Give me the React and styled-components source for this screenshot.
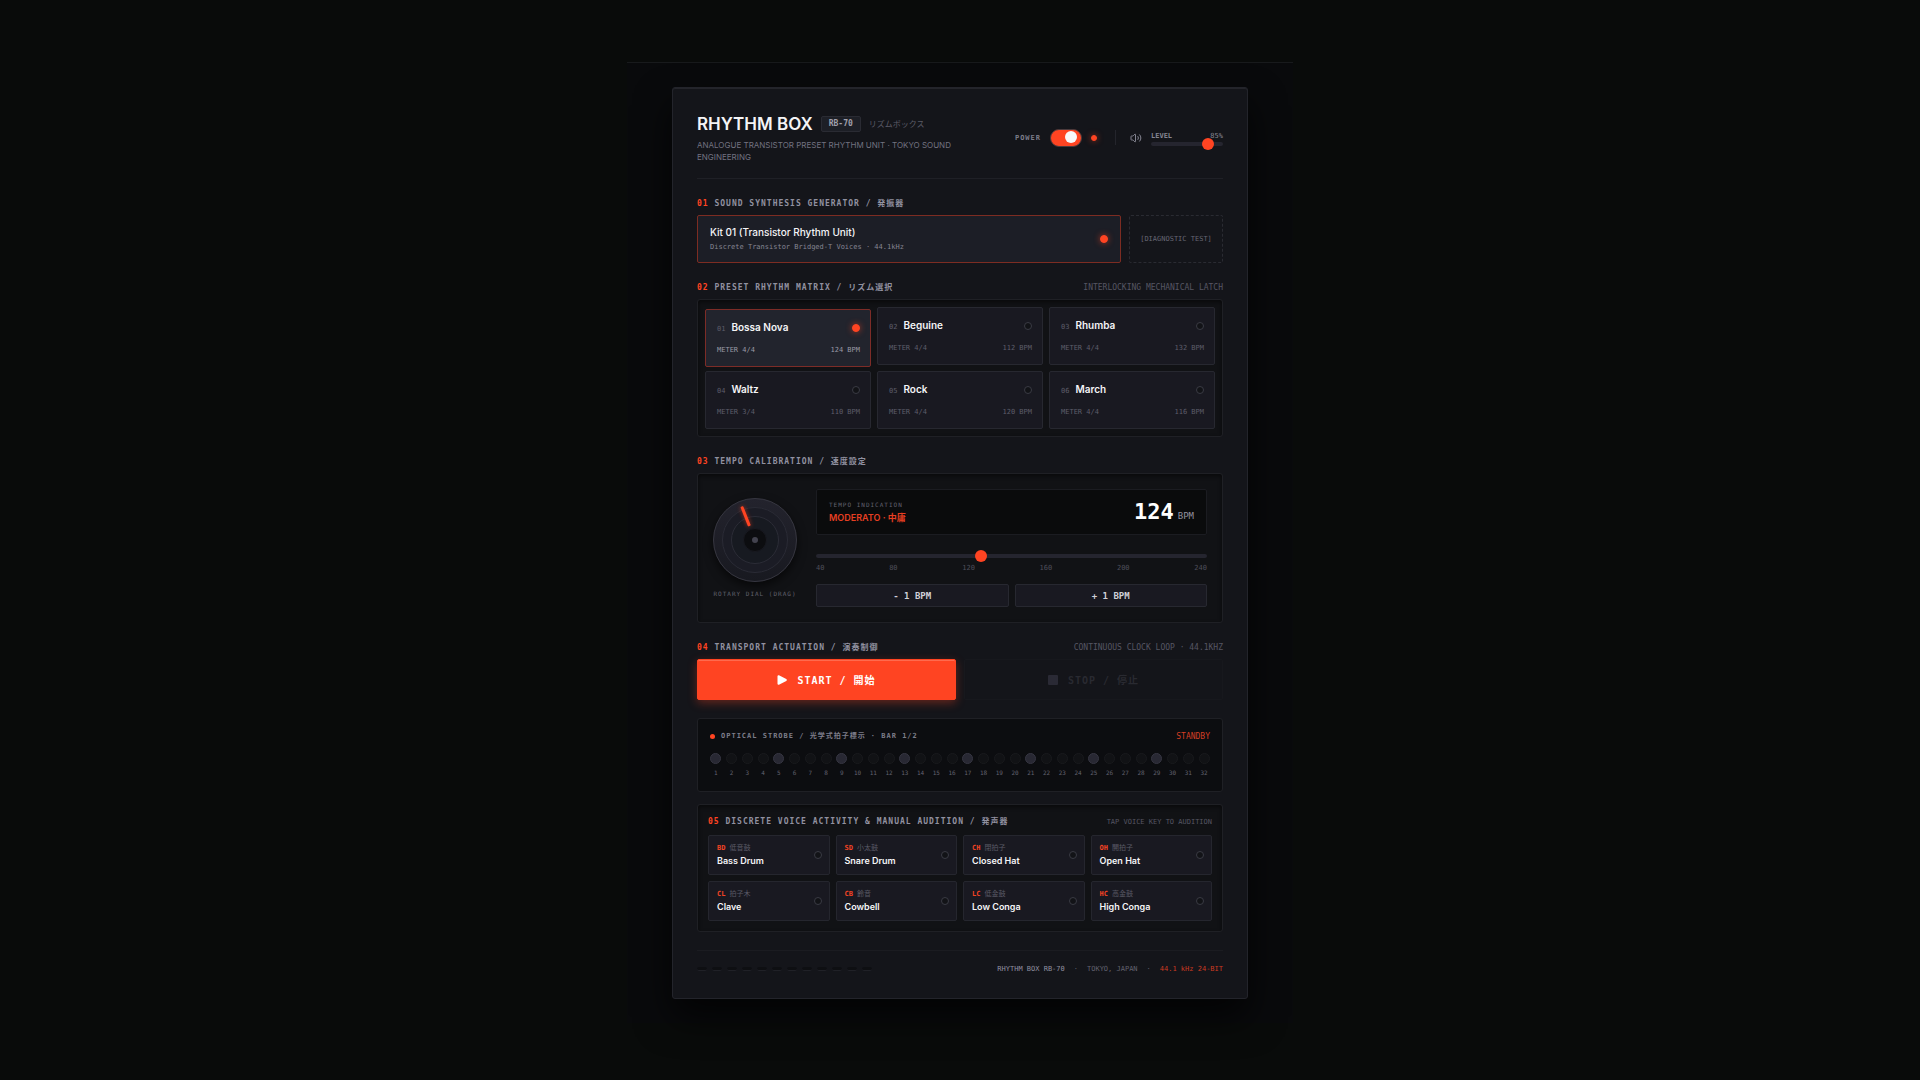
import { useState } from "react"
import styled, { createGlobalStyle } from "styled-components"
import { Volume2 } from "lucide-react"

const sans = `Inter, "Noto Sans CJK JP", sans-serif`
const mono = `"DejaVu Sans Mono", "Noto Sans CJK JP", monospace`

const GlobalStyle = createGlobalStyle`
    *{
        box-sizing:border-box;
    }
    body{
        margin:0;
        background-color:#090b0a;
        color:#f4f4f6;
        font-family:${sans};
        -webkit-font-smoothing:antialiased;
    }
    button,input{
        font:inherit;
        color:inherit;
        margin:0;
        padding:0;
    }
    h1,h2,p{
        margin:0;
    }
`
const Page = styled.div`
    min-height:100vh;
    padding:62px 24px 0;
`
const Stage = styled.main`
    max-width:666px;
    margin:0 auto;
    padding:24px 16px;
    border-top:1px solid #181a1c;
    background-color:#090a0c;
    display:flex;
    justify-content:center;
`
const Panel = styled.div`
    width:100%;
    max-width:576px;
    padding:24px;
    padding-bottom:23px;
    border:1px solid #23242b;
    border-radius:3px;
    background-color:#14151a;
    box-shadow:0 18px 36px rgba(0,0,0,0.7), inset 0 1px 0 #24252b;
    display:flex;
    flex-direction:column;
    gap:18px;
`
const Header = styled.header`
    display:flex;
    align-items:center;
    justify-content:space-between;
    gap:24px;
    padding-bottom:15px;
    border-bottom:1px solid #1f2026;
`
const Brand = styled.div`
    display:flex;
    flex-direction:column;
    gap:3px;
`
const BrandRow = styled.div`
    display:flex;
    align-items:center;
    gap:8px;
`
const Title = styled.h1`
    font-size:17px;
    line-height:24px;
    font-weight:600;
    white-space:nowrap;
`
const Badge = styled.span`
    padding:0 7px;
    font-family:${mono};
    font-size:8px;
    line-height:14px;
    font-weight:700;
    color:#a0a0ac;
    background-color:#1d1f26;
    border:1px solid #2a2b33;
    border-radius:2px;
`
const BrandKana = styled.span`
    font-size:8px;
    line-height:12px;
    color:#5b5b67;
`
const Subtitle = styled.p`
    font-size:8px;
    line-height:12px;
    color:#727280;
`
const Controls = styled.div`
    display:flex;
    align-items:center;
    flex-shrink:0;
    gap:9px;
`
const PowerLabel = styled.label`
    font-family:${mono};
    font-size:7px;
    font-weight:700;
    letter-spacing:1px;
    color:#7d7d8a;
`
const Toggle = styled.input`
    appearance:none;
    width:32px;
    height:18px;
    padding:1px 4px;
    border:1px solid #4b3a3c;
    border-radius:9px;
    background-color:${p => p.checked ? "#ff4422" : "#23232d"};
    display:flex;
    justify-content:${p => p.checked ? "flex-end" : "flex-start"};
    cursor:pointer;
    &::before{
        content:"";
        width:12px;
        height:12px;
        border-radius:50%;
        background-color:#f8f8fa;
    }
`
const Led = styled.span`
    flex:none;
    width:${p => p.$size || 8}px;
    height:${p => p.$size || 8}px;
    border-radius:50%;
    border:1px solid ${p => p.$on ? "#ff4422" : "#3a3b44"};
    background-color:${p => p.$on ? "#ff4422" : "#121317"};
    box-shadow:${p => p.$on ? "0 0 6px rgba(255,68,34,0.6)" : "none"};
`
const Divider = styled.span`
    width:1px;
    height:15px;
    margin:0 5px 0 9px;
    background-color:#24252c;
`
const Level = styled.div`
    width:72px;
    padding-top:4px;
    display:flex;
    flex-direction:column;
`
const LevelRow = styled.div`
    display:flex;
    justify-content:space-between;
    font-family:${mono};
    font-size:7px;
    line-height:8px;
    color:#858592;
    label{
        font-weight:700;
    }
`
const Range = styled.input`
    appearance:none;
    width:100%;
    height:${p => p.$height}px;
    background:transparent;
    cursor:pointer;
    display:block;
    &::-webkit-slider-runnable-track{
        height:4px;
        border-radius:2px;
        background-color:#25252f;
    }
    &::-webkit-slider-thumb{
        appearance:none;
        width:12px;
        height:12px;
        margin-top:-4px;
        border-radius:50%;
        background-color:#ff4422;
    }
`
const Section = styled.section`
    display:flex;
    flex-direction:column;
    gap:6px;
`
const Heading = styled.div`
    display:flex;
    justify-content:space-between;
    align-items:center;
    height:12px;
    padding-top:2px;
    font-family:${mono};
    line-height:12px;
`
const HeadingText = styled.h2`
    font-size:8px;
    font-weight:700;
    letter-spacing:1px;
    color:#9191a0;
    white-space:pre;
    span{
        color:#ff4422;
    }
`
const Note = styled.span`
    font-size:${p => p.$small ? 7 : 8}px;
    color:#565663;
`
const KitRow = styled.div`
    display:flex;
    gap:8px;
`
const Kit = styled.button`
    flex:1;
    height:48px;
    padding:0 12px;
    border:1px solid #7d2c22;
    border-radius:2px;
    background-color:#1c1e26;
    display:flex;
    justify-content:space-between;
    align-items:center;
    text-align:left;
    cursor:pointer;
`
const KitInfo = styled.span`
    display:flex;
    flex-direction:column;
    gap:2px;
`
const KitName = styled.span`
    font-size:10px;
    line-height:14px;
    font-weight:500;
`
const KitDesc = styled.span`
    font-family:${mono};
    font-size:7px;
    line-height:12px;
    color:#858592;
`
const Diagnostic = styled.button`
    width:94px;
    border:1px dashed #2a2b32;
    border-radius:2px;
    background:transparent;
    font-family:${mono};
    font-size:7px;
    color:#666673;
    cursor:pointer;
`
const Well = styled.div`
    padding:${p => p.$pad}px;
    border:1px solid #1f2025;
    border-radius:3px;
    background-color:#111215;
    box-shadow:inset 0 2px 4px rgba(0,0,0,0.5);
`
const Presets = styled(Well)`
    display:grid;
    grid-template-columns:repeat(3,1fr);
    gap:6px;
`
const Preset = styled.button`
    height:58px;
    padding:9px 10px 11px 11px;
    border:1px solid ${p => p.$active ? "#7d2c27" : "#272830"};
    border-radius:2px;
    background-color:${p => p.$active ? "#22242d" : "#191921"};
    transform:${p => p.$active ? "translateY(2px)" : "none"};
    color:${p => p.$active ? "#9a9aa6" : "#5d5d6a"};
    display:flex;
    flex-direction:column;
    gap:7px;
    text-align:left;
    cursor:pointer;
`
const PresetTop = styled.span`
    width:100%;
    display:flex;
    align-items:center;
    justify-content:space-between;
    line-height:16px;
`
const PresetName = styled.span`
    display:flex;
    align-items:baseline;
    gap:6px;
    font-size:10px;
    font-weight:600;
    color:#f4f4f6;
    small{
        font-family:${mono};
        font-size:7px;
        font-weight:400;
        color:#5d5d6a;
    }
`
const PresetMeta = styled.span`
    width:100%;
    display:flex;
    justify-content:space-between;
    font-family:${mono};
    font-size:7px;
    line-height:12px;
`
const TempoBox = styled(Well)`
    display:flex;
    align-items:center;
    gap:19px;
`
const DialColumn = styled.div`
    display:flex;
    flex-direction:column;
    align-items:center;
    gap:7px;
    font-family:${mono};
    font-size:6px;
    line-height:9px;
    letter-spacing:1px;
    color:#62626f;
    white-space:nowrap;
    svg{
        display:block;
        overflow:visible;
        border-radius:50%;
        box-shadow:0 4px 10px rgba(0,0,0,0.6);
    }
`
const TempoColumn = styled.div`
    flex:1;
    display:flex;
    flex-direction:column;
    gap:12px;
`
const Display = styled.div`
    height:46px;
    padding:0 12px;
    border:1px solid #1b1c21;
    border-radius:2px;
    background-color:#0a0b0c;
    display:flex;
    align-items:center;
    justify-content:space-between;
`
const TempoCaption = styled.p`
    font-family:${mono};
    font-size:6px;
    line-height:12px;
    letter-spacing:1px;
    color:#62626f;
`
const TempoName = styled.p`
    font-size:9px;
    line-height:14px;
    font-weight:600;
    color:#e63f22;
`
const Bpm = styled.p`
    display:flex;
    align-items:baseline;
    gap:4px;
    font-family:${mono};
    font-size:9px;
    color:#92929f;
    strong{
        font-size:22px;
        line-height:24px;
        color:#ffffff;
    }
`
const TempoSlider = styled.div`
    padding-top:3px;
`
const Ticks = styled.div`
    display:flex;
    justify-content:space-between;
    margin-top:2px;
    font-family:${mono};
    font-size:7px;
    line-height:8px;
    color:#4e4e5a;
`
const StepRow = styled.div`
    display:flex;
    gap:6px;
`
const Step = styled.button`
    flex:1;
    height:23px;
    border:1px solid #272830;
    border-radius:2px;
    background-color:#191921;
    font-family:${mono};
    font-size:9px;
    font-weight:700;
    color:#d0d0d8;
    cursor:pointer;
`
const TransportRow = styled.div`
    display:flex;
    gap:8px;
`
const Transport = styled.button`
    flex:1;
    height:41px;
    border:1px solid #17181d;
    border-radius:2px;
    background-color:transparent;
    font-family:${mono};
    font-size:10px;
    font-weight:700;
    letter-spacing:1px;
    color:#292a31;
    display:flex;
    align-items:center;
    justify-content:center;
    gap:10px;
    cursor:pointer;
`
const Start = styled(Transport)`
    border-color:#ff4422;
    background-color:#ff4422;
    color:#ffffff;
    box-shadow:0 3px 10px rgba(255,68,34,0.35), inset 0 1px 0 #ff6a4e;
`
const Strobe = styled(Well)`
    background-color:#0c0d10;
    padding-bottom:14px;
    box-shadow:none;
`
const StrobeHead = styled.div`
    display:flex;
    align-items:center;
    justify-content:space-between;
    height:11px;
    font-family:${mono};
    font-size:8px;
    line-height:11px;
    color:#d43e24;
`
const StrobeTitle = styled.span`
    display:flex;
    align-items:center;
    gap:6px;
    font-size:7px;
    letter-spacing:1px;
    font-weight:700;
    color:#7d7d8a;
    i{
        width:5px;
        height:5px;
        border-radius:50%;
        background-color:#ff4422;
    }
`
const Steps = styled.div`
    display:grid;
    grid-template-columns:repeat(32,minmax(0,1fr));
    gap:4px;
    margin-top:11px;
`
const StepLamp = styled.div`
    display:flex;
    flex-direction:column;
    align-items:center;
    gap:5px;
    font-family:${mono};
    font-size:6px;
    line-height:8px;
    color:#62626f;
    &::before{
        content:"";
        width:9px;
        height:9px;
        border-radius:50%;
        border:1px solid ${p => p.$beat ? "#363642" : "#191a1d"};
        background-color:${p => p.$beat ? "#282833" : "#111215"};
    }
`
const VoiceBox = styled(Well)`
    margin-top:-6px;
    display:flex;
    flex-direction:column;
    gap:8px;
`
const Voices = styled.div`
    display:grid;
    grid-template-columns:repeat(4,1fr);
    gap:6px;
`
const Voice = styled.button`
    height:40px;
    padding:0 7px 0 8px;
    border:1px solid #25262e;
    border-radius:2px;
    background-color:#191921;
    display:flex;
    align-items:center;
    justify-content:space-between;
    text-align:left;
    cursor:pointer;
`
const VoiceCode = styled.span`
    display:flex;
    gap:4px;
    font-family:${mono};
    font-size:7px;
    line-height:12px;
    color:#5a5a66;
    b{
        color:#f24324;
    }
`
const VoiceName = styled.span`
    display:block;
    font-size:9px;
    line-height:14px;
    font-weight:600;
`
const Footer = styled.footer`
    display:flex;
    align-items:center;
    justify-content:space-between;
    padding-top:12px;
    border-top:1px solid #1b1c21;
    font-family:${mono};
    font-size:7px;
    line-height:12px;
    color:#62626f;
`
const Vents = styled.div`
    display:flex;
    gap:5px;
    span{
        width:10px;
        height:4px;
        border-radius:2px;
        background-color:#0e0f12;
        border-bottom:1px solid #202127;
    }
`
const FooterText = styled.div`
    display:flex;
    gap:9px;
    span:first-child{
        color:#9090a0;
    }
    span:last-child{
        color:#cc3b22;
    }
`

const presets = [
    { name: "Bossa Nova", meter: "4/4", bpm: 124 },
    { name: "Beguine", meter: "4/4", bpm: 112 },
    { name: "Rhumba", meter: "4/4", bpm: 132 },
    { name: "Waltz", meter: "3/4", bpm: 110 },
    { name: "Rock", meter: "4/4", bpm: 120 },
    { name: "March", meter: "4/4", bpm: 116 },
]
const voices = [
    ["BD", "低音鼓", "Bass Drum"],
    ["SD", "小太鼓", "Snare Drum"],
    ["CH", "閉拍子", "Closed Hat"],
    ["OH", "開拍子", "Open Hat"],
    ["CL", "拍子木", "Clave"],
    ["CB", "鈴音", "Cowbell"],
    ["LC", "低金鼓", "Low Conga"],
    ["HC", "高金鼓", "High Conga"],
]
const ticks = [40, 80, 120, 160, 200, 240]

const SectionHeading = ({ num, text, note, small }) => (
    <Heading>
        <HeadingText><span>{num}</span> {text}</HeadingText>
        {note && <Note $small={small}>{note}</Note>}
    </Heading>
)

const Dial = ({ bpm }) => {
    const angle = ((bpm - 40) / 200) * 270 - 135
    return (
        <svg width="84" height="84" viewBox="0 0 84 84" role="img" aria-label="Rotary tempo dial">
            <defs>
                <linearGradient id="cap" x1="0" y1="0" x2="0" y2="1">
                    <stop offset="0" stopColor="#23232d" />
                    <stop offset="1" stopColor="#181920" />
                </linearGradient>
                <filter id="glow" x="-300%" y="-50%" width="700%" height="200%">
                    <feGaussianBlur stdDeviation="2" />
                </filter>
            </defs>
            <circle cx="42" cy="42" r="41.5" fill="url(#cap)" stroke="#363640" />
            <circle cx="42" cy="42" r="32.5" fill="#1b1c25" stroke="#2a2b35" />
            <circle cx="42" cy="42" r="23.5" fill="#171a21" stroke="#2b2c36" />
            <circle cx="42" cy="42" r="11.5" fill="#0c0d10" stroke="#181920" />
            <circle cx="42" cy="42" r="3" fill="#42424e" />
            <g transform={`rotate(${angle} 42 42)`}>
                <rect x="40.5" y="6" width="3" height="21" rx="1" fill="#ff4422" opacity="0.6" filter="url(#glow)" />
                <rect x="40.5" y="6" width="3" height="21" rx="1" fill="#ff4422" />
            </g>
        </svg>
    )
}

const App = () => {
    const [power, setPower] = useState(true)
    const [level, setLevel] = useState(85)
    const [active, setActive] = useState(0)
    const [bpm, setBpm] = useState(124)

    const pick = (i) => {
        setActive(i)
        setBpm(presets[i].bpm)
    }

    return (
        <Page>
            <GlobalStyle />
            <Stage>
                <Panel>
                    <Header>
                        <Brand>
                            <BrandRow>
                                <Title>RHYTHM BOX</Title>
                                <Badge>RB-70</Badge>
                                <BrandKana>リズムボックス</BrandKana>
                            </BrandRow>
                            <Subtitle>ANALOGUE TRANSISTOR PRESET RHYTHM UNIT · TOKYO SOUND ENGINEERING</Subtitle>
                        </Brand>
                        <Controls>
                            <PowerLabel htmlFor="power">POWER</PowerLabel>
                            <Toggle id="power" type="checkbox" checked={power} onChange={() => setPower(!power)} />
                            <Led $on={power} $size={6} />
                            <Divider />
                            <Volume2 size={12} color="#858592" />
                            <Level>
                                <LevelRow>
                                    <label htmlFor="level">LEVEL</label>
                                    <span>{level}%</span>
                                </LevelRow>
                                <Range id="level" type="range" min="0" max="100" $height={8} value={level} onChange={(e) => setLevel(Number(e.target.value))} />
                            </Level>
                        </Controls>
                    </Header>

                    <Section>
                        <SectionHeading num="01" text="SOUND SYNTHESIS GENERATOR / 発振器" />
                        <KitRow>
                            <Kit>
                                <KitInfo>
                                    <KitName>Kit 01 (Transistor Rhythm Unit)</KitName>
                                    <KitDesc>Discrete Transistor Bridged-T Voices · 44.1kHz</KitDesc>
                                </KitInfo>
                                <Led $on />
                            </Kit>
                            <Diagnostic>[DIAGNOSTIC TEST]</Diagnostic>
                        </KitRow>
                    </Section>

                    <Section>
                        <SectionHeading num="02" text="PRESET RHYTHM MATRIX / リズム選択" note="INTERLOCKING MECHANICAL LATCH" />
                        <Presets $pad={7}>
                            {presets.map((p, i) => (
                                <Preset key={p.name} $active={i === active} onClick={() => pick(i)}>
                                    <PresetTop>
                                        <PresetName><small>0{i + 1}</small>{p.name}</PresetName>
                                        <Led $on={i === active} />
                                    </PresetTop>
                                    <PresetMeta>
                                        <span>METER {p.meter}</span>
                                        <span>{p.bpm} BPM</span>
                                    </PresetMeta>
                                </Preset>
                            ))}
                        </Presets>
                    </Section>

                    <Section>
                        <SectionHeading num="03" text="TEMPO CALIBRATION / 速度設定" />
                        <TempoBox $pad={15}>
                            <DialColumn>
                                <Dial bpm={bpm} />
                                <span>ROTARY DIAL (DRAG)</span>
                            </DialColumn>
                            <TempoColumn>
                                <Display>
                                    <div>
                                        <TempoCaption>TEMPO INDICATION</TempoCaption>
                                        <TempoName>MODERATO · 中庸</TempoName>
                                    </div>
                                    <Bpm><strong>{bpm}</strong>BPM</Bpm>
                                </Display>
                                <TempoSlider>
                                    <Range aria-label="Tempo" type="range" min="40" max="240" $height={12} value={bpm} onChange={(e) => setBpm(Number(e.target.value))} />
                                    <Ticks>
                                        {ticks.map((t) => <span key={t}>{t}</span>)}
                                    </Ticks>
                                </TempoSlider>
                                <StepRow>
                                    <Step onClick={() => setBpm(Math.max(40, bpm - 1))}>- 1 BPM</Step>
                                    <Step onClick={() => setBpm(Math.min(240, bpm + 1))}>+ 1 BPM</Step>
                                </StepRow>
                            </TempoColumn>
                        </TempoBox>
                    </Section>

                    <Section>
                        <SectionHeading num="04" text="TRANSPORT ACTUATION / 演奏制御" note="CONTINUOUS CLOCK LOOP · 44.1KHZ" />
                        <TransportRow>
                            <Start>
                                <svg width="10" height="10" viewBox="0 0 10 10">
                                    <path d="M1.5 1.2v7.6L8.8 5z" fill="#fff" stroke="#fff" strokeWidth="2" strokeLinejoin="round" />
                                </svg>
                                START / 開始
                            </Start>
                            <Transport disabled>
                                <svg width="10" height="10" viewBox="0 0 10 10">
                                    <rect width="10" height="10" rx="1" fill="#2a2a35" />
                                </svg>
                                STOP / 停止
                            </Transport>
                        </TransportRow>
                    </Section>

                    <Strobe $pad={12}>
                        <StrobeHead>
                            <StrobeTitle><i />OPTICAL STROBE / 光学式拍子標示 · BAR 1/2</StrobeTitle>
                            <span>STANDBY</span>
                        </StrobeHead>
                        <Steps>
                            {Array.from({ length: 32 }, (_, i) => (
                                <StepLamp key={i} $beat={i % 4 === 0}>{i + 1}</StepLamp>
                            ))}
                        </Steps>
                    </Strobe>

                    <VoiceBox $pad={10}>
                        <SectionHeading num="05" text="DISCRETE VOICE ACTIVITY & MANUAL AUDITION / 発声器" note="TAP VOICE KEY TO AUDITION" small />
                        <Voices>
                            {voices.map(([code, kanji, name]) => (
                                <Voice key={code}>
                                    <span>
                                        <VoiceCode><b>{code}</b>{kanji}</VoiceCode>
                                        <VoiceName>{name}</VoiceName>
                                    </span>
                                    <Led />
                                </Voice>
                            ))}
                        </Voices>
                    </VoiceBox>

                    <Footer>
                        <Vents>
                            {Array.from({ length: 12 }, (_, i) => <span key={i} />)}
                        </Vents>
                        <FooterText>
                            <span>RHYTHM BOX RB-70</span>
                            <span>·</span>
                            <span>TOKYO, JAPAN</span>
                            <span>·</span>
                            <span>44.1 kHz 24-BIT</span>
                        </FooterText>
                    </Footer>
                </Panel>
            </Stage>
        </Page>
    )
}

export default App
